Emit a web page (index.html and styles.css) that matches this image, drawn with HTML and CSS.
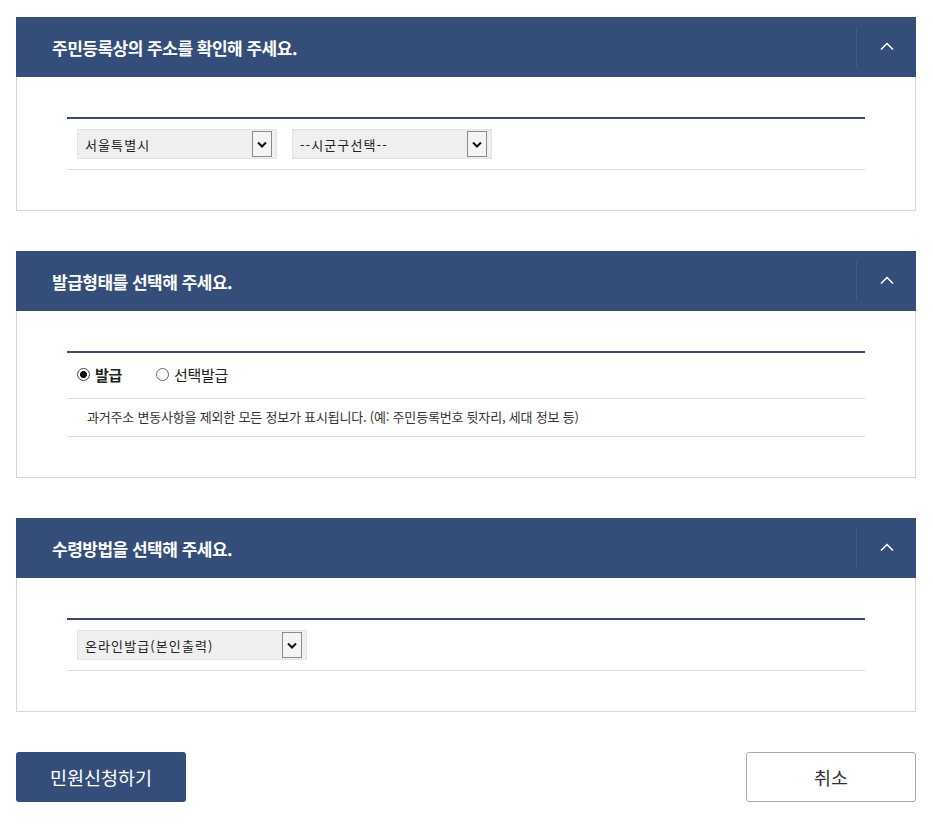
FILE: index.html
```html
<!DOCTYPE html>
<html lang="ko">
<head>
<meta charset="utf-8">
<title>민원신청</title>
<link rel="stylesheet" href="styles.css">
</head>
<body>
<div class="page">
  <section class="panel">
    <div class="panel-head">
      <h2 class="panel-title">주민등록상의 주소를 확인해 주세요.</h2>
      <button class="toggle" type="button" aria-label="접기">
        <svg width="14" height="8" viewBox="0 0 14 8"><polyline points="1,7.5 7,1.5 13,7.5" fill="none" stroke="#fff" stroke-width="1.5"/></svg>
      </button>
    </div>
    <div class="panel-body">
      <div class="table">
        <div class="row row-select">
          <div class="sel sel-w200">
            <span class="sel-text">서울특별시</span>
            <span class="sel-arrow"><svg width="10" height="7" viewBox="0 0 10 7"><polyline points="1,1.5 5,5.5 9,1.5" fill="none" stroke="#111" stroke-width="2"/></svg></span>
          </div>
          <div class="sel sel-w200">
            <span class="sel-text">--시군구선택--</span>
            <span class="sel-arrow"><svg width="10" height="7" viewBox="0 0 10 7"><polyline points="1,1.5 5,5.5 9,1.5" fill="none" stroke="#111" stroke-width="2"/></svg></span>
          </div>
        </div>
      </div>
    </div>
  </section>

  <section class="panel">
    <div class="panel-head">
      <h2 class="panel-title">발급형태를 선택해 주세요.</h2>
      <button class="toggle" type="button" aria-label="접기">
        <svg width="14" height="8" viewBox="0 0 14 8"><polyline points="1,7.5 7,1.5 13,7.5" fill="none" stroke="#fff" stroke-width="1.5"/></svg>
      </button>
    </div>
    <div class="panel-body">
      <div class="table">
        <div class="row row-radio">
          <label class="radio radio-on"><input type="radio" name="type" checked><span>발급</span></label>
          <label class="radio"><input type="radio" name="type"><span>선택발급</span></label>
        </div>
        <div class="row row-desc">과거주소 변동사항을 제외한 모든 정보가 표시됩니다. (예: 주민등록번호 뒷자리, 세대 정보 등)</div>
      </div>
    </div>
  </section>

  <section class="panel">
    <div class="panel-head">
      <h2 class="panel-title">수령방법을 선택해 주세요.</h2>
      <button class="toggle" type="button" aria-label="접기">
        <svg width="14" height="8" viewBox="0 0 14 8"><polyline points="1,7.5 7,1.5 13,7.5" fill="none" stroke="#fff" stroke-width="1.5"/></svg>
      </button>
    </div>
    <div class="panel-body">
      <div class="table">
        <div class="row row-select">
          <div class="sel sel-w230">
            <span class="sel-text">온라인발급(본인출력)</span>
            <span class="sel-arrow"><svg width="10" height="7" viewBox="0 0 10 7"><polyline points="1,1.5 5,5.5 9,1.5" fill="none" stroke="#111" stroke-width="2"/></svg></span>
          </div>
        </div>
      </div>
    </div>
  </section>

  <div class="actions">
    <button class="btn btn-primary" type="button">민원신청하기</button>
    <button class="btn btn-cancel" type="button">취소</button>
  </div>
</div>
</body>
</html>
```

FILE: styles.css
```css
* { box-sizing: border-box; }
html, body { margin: 0; padding: 0; background: #fff; }
body {
  font-family: "Noto Sans CJK KR", "Noto Sans", sans-serif;
  color: #333;
}
.page {
  width: 933px;
  padding: 17px 17px 0 16px;
  display: flex;
  flex-direction: column;
  gap: 40px;
}
.panel { width: 900px; }
.panel-head {
  height: 60px;
  background: #344e79;
  display: flex;
  align-items: center;
  justify-content: space-between;
  padding-left: 36px;
}
.panel-title {
  margin: 0;
  color: #fff;
  font-size: 17px;
  font-weight: 700;
  letter-spacing: -0.5px;
  line-height: 1;
}
.toggle {
  width: 60px;
  height: 40px;
  border: 0;
  border-left: 1px solid #41598a;
  background: transparent;
  display: flex;
  align-items: center;
  justify-content: center;
  padding: 0 0 2px 0;
  cursor: pointer;
}
.panel-body {
  border: 1px solid #d6d6d6;
  border-top: 0;
  padding: 40px 50px 40px 50px;
}
.table {
  border-top: 2px solid #3b4a68;
}
.row {
  border-bottom: 1px solid #dcdcdc;
  display: flex;
  align-items: center;
  padding: 0 10px;
}
.row-select { height: 51px; gap: 15px; }
.row-radio { height: 46px; gap: 34px; padding-bottom: 2px; }
.row-desc {
  height: 38px;
  padding-left: 20px;
  font-size: 13px;
  letter-spacing: -0.2px;
  color: #333;
  padding-bottom: 2px;
}
.sel {
  height: 30px;
  background: #efefef;
  border: 1px solid #e3e3e3;
  display: flex;
  align-items: center;
  padding: 0 4px 0 7px;
}
.sel-w200 { width: 200px; }
.sel-w230 { width: 230px; }
.sel-text {
  flex: 1;
  font-size: 13px;
  letter-spacing: 1.1px;
  color: #222;
}
.sel-arrow {
  width: 20px;
  height: 26px;
  border: 1px solid #8a8a8a;
  background: #f4f4f4;
  display: flex;
  align-items: center;
  justify-content: center;
}
.radio {
  display: flex;
  align-items: center;
  gap: 5px;
  font-size: 15px;
  letter-spacing: -0.3px;
  color: #222;
}
.radio-on { font-weight: 700; }
.radio input {
  appearance: none;
  -webkit-appearance: none;
  margin: 0;
  width: 13px;
  height: 13px;
  border: 1px solid #666;
  border-radius: 50%;
  background: #fff;
}
.radio input:checked {
  background: radial-gradient(circle, #111 0 3.2px, #fff 3.8px);
  border-color: #444;
}
.actions {
  width: 900px;
  display: flex;
  justify-content: space-between;
}
.btn {
  width: 170px;
  height: 50px;
  border-radius: 3px;
  font-family: "Noto Sans CJK KR", "Noto Sans", sans-serif;
  font-size: 18.5px;
  letter-spacing: 0;
  cursor: pointer;
}
.btn-primary {
  background: #344e79;
  color: #fff;
  border: 0;
}
.btn-cancel {
  background: #fff;
  color: #333;
  border: 1px solid #aaa;
}
```
